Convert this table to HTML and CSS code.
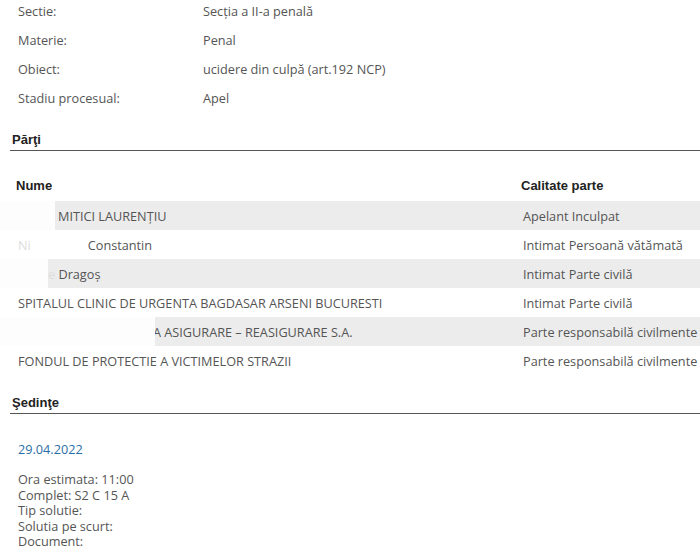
FILE: index.html
```html
<!DOCTYPE html>
<html lang="ro">
<head>
    <meta charset="UTF-8">
    <meta name="viewport" content="width=device-width, initial-scale=1.0">
    <title>Dosar - detalii</title>
    <link rel="stylesheet" href="styles.css">
</head>
<body>
    <table class="info">
        <tr><td class="label">Sectie:</td><td>Secţia a II-a penală</td></tr>
        <tr><td class="label">Materie:</td><td>Penal</td></tr>
        <tr><td class="label">Obiect:</td><td>ucidere din culpă (art.192 NCP)</td></tr>
        <tr><td class="label">Stadiu procesual:</td><td>Apel</td></tr>
    </table>

    <h3 class="section">Părţi</h3>

    <table class="parti">
        <thead>
            <tr><th class="col-name">Nume</th><th>Calitate parte</th></tr>
        </thead>
        <tbody>
            <tr class="odd">
                <td class="name"><span class="mask mask-1"></span><span class="shift-1">MITICI LAURENŢIU</span></td>
                <td>Apelant Inculpat</td>
            </tr>
            <tr>
                <td class="name"><span class="faint">Ni</span><span class="shift-2">Constantin</span></td>
                <td>Intimat Persoană vătămată</td>
            </tr>
            <tr class="odd">
                <td class="name"><span class="mask mask-3"></span><span class="shift-3"><span class="faint">e</span> Dragoş</span></td>
                <td>Intimat Parte civilă</td>
            </tr>
            <tr>
                <td class="name">SPITALUL CLINIC DE URGENTA BAGDASAR ARSENI BUCURESTI</td>
                <td>Intimat Parte civilă</td>
            </tr>
            <tr class="odd">
                <td class="name"><span class="mask mask-5"></span><span class="shift-5">A ASIGURARE – REASIGURARE S.A.</span></td>
                <td>Parte responsabilă civilmente</td>
            </tr>
            <tr>
                <td class="name">FONDUL DE PROTECTIE A VICTIMELOR STRAZII</td>
                <td>Parte responsabilă civilmente</td>
            </tr>
        </tbody>
    </table>

    <h3 class="section section-sedinte">Şedinţe</h3>

    <div class="sedinta">
        <div class="date">29.04.2022</div>
        <div class="details">
            Ora estimata: 11:00<br>
            Complet: S2 C 15 A<br>
            Tip solutie:<br>
            Solutia pe scurt:<br>
            Document:
        </div>
    </div>
</body>
</html>
```

FILE: styles.css
```css
body {
    margin: 0;
    font-family: "Open Sans", sans-serif;
    font-size: 12.7px;
    color: #555;
    background: #fff;
    overflow: hidden;
}
table {
    border-collapse: collapse;
}
.info {
    margin: -4px 0 0 10px;
}
.info td {
    height: 29px;
    padding: 0 8px;
    vertical-align: middle;
}
.info .label {
    width: 169px;
}
.section {
    margin: 19px 0 0 10px;
    padding: 0 2px 1px;
    border-bottom: 1px solid #555;
    font-family: "Liberation Sans", Arial, sans-serif;
    font-size: 13px;
    font-weight: bold;
    color: #222;
    line-height: 18px;
}
.section-sedinte {
    margin-top: 19px;
}
.parti {
    margin: 19px 0 0 10px;
    width: 700px;
}
.parti th {
    text-align: left;
    font-family: "Liberation Sans", Arial, sans-serif;
    font-size: 13px;
    color: #222;
    height: 31px;
    padding: 0 6px;
}
.parti th.col-name {
    width: 493px;
}
.parti td {
    height: 29px;
    padding: 0 8px;
    white-space: nowrap;
}
.parti tr.odd td {
    background: #ececec;
}
.parti td.name {
    position: relative;
}
.mask {
    position: absolute;
    top: 0;
    bottom: 0;
    left: -10px;
    background: #fdfdfd;
}
.mask-1 { width: 55px; }
.mask-3 { width: 48px; }
.mask-5 { width: 155px; }
.shift-1 { padding-left: 40px; }
.shift-2 { padding-left: 57px; }
.shift-3 { padding-left: 30px; }
.shift-5 { padding-left: 135px; }
.faint {
    color: #ddd;
}
.sedinta {
    padding: 26px 18px 0;
}
.date {
    color: #2a6ea6;
    line-height: 18px;
}
.details {
    margin-top: 14px;
    line-height: 15.5px;
}
```
